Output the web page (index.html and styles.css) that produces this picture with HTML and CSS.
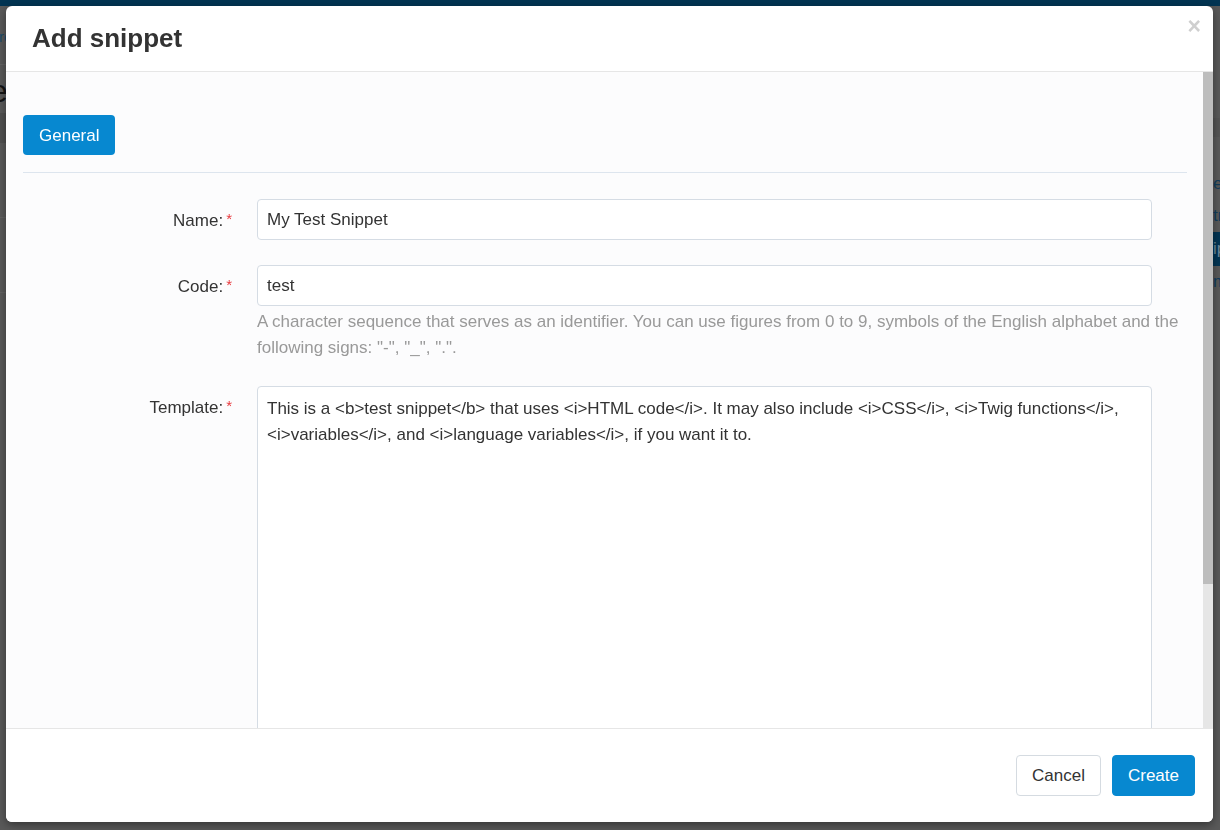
FILE: index.html
```html
<!DOCTYPE html>
<html lang="en">
<head>
<meta charset="utf-8">
<title>Add snippet</title>
<link rel="stylesheet" href="styles.css">
</head>
<body>
<div class="page">
  <div class="topbar"></div>
  <div class="layout">
    <main class="main">
      <div class="crumbs"><span>ro</span></div>
      <h1 class="page-title">e</h1>
      <div class="toolbar"></div>
      <div class="table-row"></div>
      <div class="table-row"></div>
    </main>
    <aside class="sidebar">
      <div class="side-band"></div>
      <ul class="side-menu">
        <li>edit</li>
        <li>translate</li>
        <li class="active">ipsum</li>
        <li>menu</li>
      </ul>
    </aside>
  </div>
</div>

<div class="modal" role="dialog" aria-labelledby="modal-title">
  <header class="modal-header">
    <h2 class="modal-title" id="modal-title">Add snippet</h2>
    <button class="close" type="button" aria-label="Close">×</button>
  </header>

  <div class="modal-body">
    <div class="body-scroll">
      <nav class="tabs">
        <button class="tab active" type="button">General</button>
      </nav>

      <form class="form">
        <div class="form-row">
          <label class="form-label" for="f-name">Name:<span class="req">*</span></label>
          <div class="form-field">
            <input class="input" id="f-name" type="text" value="My Test Snippet">
          </div>
        </div>

        <div class="form-row">
          <label class="form-label" for="f-code">Code:<span class="req">*</span></label>
          <div class="form-field">
            <input class="input" id="f-code" type="text" value="test">
            <p class="help">A character sequence that serves as an identifier. You can use figures from 0 to 9, symbols of the English alphabet and the following signs: "-", "_", ".".</p>
          </div>
        </div>

        <div class="form-row">
          <label class="form-label" for="f-template">Template:<span class="req">*</span></label>
          <div class="form-field">
            <textarea class="input textarea" id="f-template">This is a &lt;b&gt;test snippet&lt;/b&gt; that uses &lt;i&gt;HTML code&lt;/i&gt;. It may also include &lt;i&gt;CSS&lt;/i&gt;, &lt;i&gt;Twig functions&lt;/i&gt;, &lt;i&gt;variables&lt;/i&gt;, and &lt;i&gt;language variables&lt;/i&gt;, if you want it to.</textarea>
          </div>
        </div>
      </form>
    </div>
    <div class="scrollbar" aria-hidden="true">
      <div class="scrollbar-thumb"></div>
    </div>
  </div>

  <footer class="modal-footer">
    <button class="btn btn-default" type="button">Cancel</button>
    <button class="btn btn-primary" type="button">Create</button>
  </footer>
</div>
</body>
</html>
```

FILE: styles.css
```css
* {
  box-sizing: border-box;
}

html, body {
  margin: 0;
  height: 100%;
  overflow: hidden;
}

body {
  font-family: "Liberation Sans", Arial, Helvetica, sans-serif;
  color: #333;
  background: #595959;
}

/* ---------- page behind the dialog (already dimmed) ---------- */
.page {
  height: 100%;
}

.topbar {
  height: 6px;
  background: #023452;
}

.layout {
  display: grid;
  grid-template-columns: 1212px 260px;
}

.main {
  display: flex;
  flex-direction: column;
}

.crumbs {
  height: 59px;
  display: flex;
  align-items: center;
  border-bottom: 1px solid #636363;
  font-size: 15px;
  color: #1d4a68;
  margin-left: -1px;
  padding-top: 2px;
}

.page-title {
  margin: 8px 0 0 -10px;
  font-size: 32px;
  font-weight: normal;
  line-height: 36px;
  color: #141414;
}

.toolbar {
  height: 30px;
  margin-top: 4px;
  background: #4f4f4f;
}

.table-row {
  height: 75px;
  border-bottom: 1px solid #626262;
}

.sidebar {
  display: flex;
  flex-direction: column;
  padding-top: 112px;
}

.side-band {
  height: 19px;
  background: #545454;
}

.side-menu {
  list-style: none;
  margin: 31px 0 0;
  padding: 0;
  font-size: 17px;
  color: #123d5c;
}

.side-menu li {
  height: 32px;
  line-height: 32px;
  padding-left: 1px;
}

.side-menu li.active {
  height: 34px;
  line-height: 34px;
  background: #033553;
  color: #6b8799;
}

/* ---------- dialog ---------- */
.modal {
  position: fixed;
  top: 6px;
  left: 6px;
  width: 1207px;
  height: 816px;
  display: flex;
  flex-direction: column;
  background: #fff;
  border-radius: 6px;
  overflow: hidden;
  box-shadow: 0 3px 9px rgba(0, 0, 0, 0.4);
}

.modal-header {
  flex: 0 0 66px;
  display: flex;
  justify-content: space-between;
  align-items: center;
  padding: 0 12px 0 26px;
  border-bottom: 1px solid #e6e6e6;
}

.modal-title {
  margin: 0;
  font-size: 26px;
  font-weight: bold;
  line-height: 30px;
  color: #333;
  padding-bottom: 2px;
}

.close {
  align-self: flex-start;
  margin-top: 9px;
  padding: 0;
  border: 0;
  background: none;
  font-family: "Liberation Sans", Arial, sans-serif;
  font-size: 23px;
  font-weight: bold;
  line-height: 22px;
  color: #cfcfcf;
  cursor: pointer;
}

.modal-body {
  flex: 1 1 auto;
  min-height: 0;
  display: flex;
  background: #fcfcfd;
}

.body-scroll {
  flex: 1 1 auto;
  min-width: 0;
  overflow: hidden;
  padding: 43px 16px 27px 17px;
}

.scrollbar {
  flex: 0 0 10px;
  background: #e6e6e6;
}

.scrollbar-thumb {
  height: 512px;
  background: #bdbdbd;
}

.tabs {
  display: flex;
  padding-bottom: 17px;
  border-bottom: 1px solid #dde5ee;
}

.tab {
  height: 40px;
  padding: 0 16px;
  border: 0;
  border-radius: 4px;
  background: #0788d0;
  color: #fff;
  font-family: inherit;
  font-size: 17px;
  padding-top: 1px;
}

.form {
  display: flex;
  flex-direction: column;
  gap: 25px;
  padding-top: 26px;
}

.form-row {
  display: grid;
  grid-template-columns: 210px 1fr;
  column-gap: 24px;
  align-items: start;
}

.form-label {
  text-align: right;
  font-size: 17px;
  line-height: 39px;
  color: #333;
  padding-right: 1px;
}

.req {
  margin-left: 3px;
  font-size: 15px;
  color: #e8383d;
  vertical-align: 2px;
}

.form-field {
  min-width: 0;
}

.input {
  display: block;
  width: 895px;
  height: 41px;
  padding: 0 9px;
  border: 1px solid #d5dce4;
  border-radius: 4px;
  background: #fff;
  font-family: inherit;
  font-size: 17px;
  color: #333;
}

.help {
  margin: 3px 0 0;
  font-size: 17px;
  line-height: 26px;
  color: #999;
}

.textarea {
  height: 500px;
  padding: 9px 9px;
  line-height: 26px;
  resize: vertical;
}

.modal-footer {
  flex: 0 0 94px;
  display: flex;
  justify-content: flex-end;
  align-items: center;
  gap: 11px;
  padding: 0 18px;
  border-top: 1px solid #e6e6e6;
  background: #fff;
}

.btn {
  height: 41px;
  padding: 0 15px;
  border-radius: 4px;
  font-family: inherit;
  font-size: 17px;
  cursor: pointer;
}

.btn-default {
  border: 1px solid #d5dbe1;
  background: #fff;
  color: #333;
}

.btn-primary {
  border: 1px solid #0788d0;
  background: #0788d0;
  color: #fff;
}
```
